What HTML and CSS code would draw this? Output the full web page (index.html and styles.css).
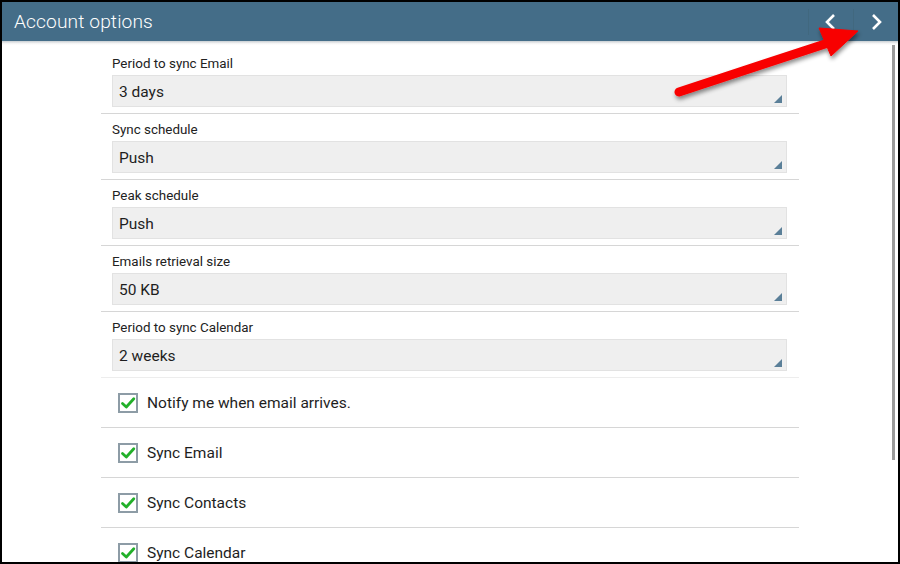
FILE: index.html
```html
<!DOCTYPE html>
<html>
<head>
<meta charset="utf-8">
<link rel="stylesheet" href="styles.css">
</head>
<body>
<div class="app">
  <header class="bar">
    <h1 class="title">Account options</h1>
    <div class="nav">
      <span class="sep"></span>
      <button class="navbtn" aria-label="Previous">
        <svg width="14" height="18" viewBox="0 0 14 18"><path d="M10 2 L3 9 L10 16" fill="none" stroke="#fff" stroke-width="2.6"/></svg>
      </button>
      <span class="sep"></span>
      <button class="navbtn" aria-label="Next">
        <svg width="14" height="18" viewBox="0 0 14 18"><path d="M4 2 L11 9 L4 16" fill="none" stroke="#fff" stroke-width="2.6"/></svg>
      </button>
    </div>
  </header>
  <div class="shadow"></div>
  <main class="content">
    <div class="list">
      <div class="row">
        <div class="label">Period to sync Email</div>
        <div class="select">3 days<span class="corner"></span></div>
      </div>
      <div class="row">
        <div class="label">Sync schedule</div>
        <div class="select">Push<span class="corner"></span></div>
      </div>
      <div class="row">
        <div class="label">Peak schedule</div>
        <div class="select">Push<span class="corner"></span></div>
      </div>
      <div class="row">
        <div class="label">Emails retrieval size</div>
        <div class="select">50 KB<span class="corner"></span></div>
      </div>
      <div class="row row-light">
        <div class="label">Period to sync Calendar</div>
        <div class="select">2 weeks<span class="corner"></span></div>
      </div>
      <div class="check-row">
        <span class="box"><svg width="20" height="20" viewBox="0 0 20 20"><rect x="1" y="1" width="18" height="18" fill="#fff" stroke="#8d9ca6" stroke-width="2"/><path d="M4.5 10.5 L8.3 14 L15.8 5.8" fill="none" stroke="#22b02a" stroke-width="2.8" stroke-linecap="round" stroke-linejoin="round"/></svg></span>
        <span class="ctext">Notify me when email arrives.</span>
      </div>
      <div class="check-row">
        <span class="box"><svg width="20" height="20" viewBox="0 0 20 20"><rect x="1" y="1" width="18" height="18" fill="#fff" stroke="#8d9ca6" stroke-width="2"/><path d="M4.5 10.5 L8.3 14 L15.8 5.8" fill="none" stroke="#22b02a" stroke-width="2.8" stroke-linecap="round" stroke-linejoin="round"/></svg></span>
        <span class="ctext">Sync Email</span>
      </div>
      <div class="check-row">
        <span class="box"><svg width="20" height="20" viewBox="0 0 20 20"><rect x="1" y="1" width="18" height="18" fill="#fff" stroke="#8d9ca6" stroke-width="2"/><path d="M4.5 10.5 L8.3 14 L15.8 5.8" fill="none" stroke="#22b02a" stroke-width="2.8" stroke-linecap="round" stroke-linejoin="round"/></svg></span>
        <span class="ctext">Sync Contacts</span>
      </div>
      <div class="check-row">
        <span class="box"><svg width="20" height="20" viewBox="0 0 20 20"><rect x="1" y="1" width="18" height="18" fill="#fff" stroke="#8d9ca6" stroke-width="2"/><path d="M4.5 10.5 L8.3 14 L15.8 5.8" fill="none" stroke="#22b02a" stroke-width="2.8" stroke-linecap="round" stroke-linejoin="round"/></svg></span>
        <span class="ctext">Sync Calendar</span>
      </div>
    </div>
    <div class="scrollbar"></div>
  </main>
  <svg class="arrow" width="896" height="120" viewBox="0 0 896 120">
    <defs>
      <filter id="ds" x="-10%" y="-30%" width="120%" height="160%">
        <feDropShadow dx="1" dy="3" stdDeviation="2" flood-color="#000" flood-opacity="0.45"/>
      </filter>
    </defs>
    <g filter="url(#ds)" fill="#f80000" stroke="#f80000">
      <line x1="677" y1="90" x2="826" y2="41" stroke-width="9" stroke-linecap="round"/>
      <polygon points="817,26 856,29 829,54" stroke-width="1" stroke-linejoin="round"/>
    </g>
  </svg>
</div>
</body>
</html>
```
FILE: styles.css
```css
html, body {
  margin: 0;
  padding: 0;
  background: #000;
}
body {
  width: 900px;
  height: 564px;
  overflow: hidden;
  font-family: Roboto, "Liberation Sans", sans-serif;
}
.app {
  position: relative;
  margin: 2px;
  width: 896px;
  height: 560px;
  background: #fff;
  overflow: hidden;
  display: flex;
  flex-direction: column;
}
.bar {
  height: 39px;
  flex: 0 0 39px;
  background: #446d88;
  display: flex;
  align-items: center;
  justify-content: space-between;
}
.title {
  margin: 0 0 0 12px;
  font-weight: 300;
  font-size: 19.2px;
  color: #fff;
  letter-spacing: 0.1px;
}
.nav {
  display: flex;
  align-items: center;
  height: 100%;
}
.sep {
  width: 1px;
  height: 26px;
  background: #41687f;
}
.navbtn {
  width: 44px;
  height: 100%;
  border: 0;
  padding: 0;
  background: transparent;
  display: flex;
  align-items: center;
  justify-content: center;
}
.shadow {
  height: 4px;
  flex: 0 0 4px;
  background: linear-gradient(#c8ced2, #f4f4f4 60%, #fff);
}
.content {
  flex: 1;
  position: relative;
  display: flex;
  padding-top: 3px;
}
.list {
  margin-left: 99px;
  width: 698px;
}
.row {
  padding: 5px 12px 6px 11px;
  border-bottom: 1px solid #d6d6d6;
  display: flex;
  flex-direction: column;
  gap: 2px;
}
.row-light {
  border-bottom-color: #ededed;
}
.label {
  font-size: 13.4px;
  line-height: 21px;
  height: 20px;
  color: #222;
}
.select {
  position: relative;
  height: 30px;
  background: #efefef;
  border: 1px solid #e2e2e2;
  font-size: 15.5px;
  line-height: 32px;
  padding-left: 6px;
  color: #1e1e1e;
}
.corner {
  position: absolute;
  right: 4px;
  bottom: 3px;
  width: 0;
  height: 0;
  border-left: 8px solid transparent;
  border-bottom: 8px solid #5a7f98;
}
.check-row {
  height: 49px;
  border-bottom: 1px solid #d6d6d6;
  display: flex;
  align-items: center;
  padding-left: 17px;
  gap: 9px;
}
.box {
  width: 20px;
  height: 20px;
  display: block;
}
.box svg {
  display: block;
}
.ctext {
  font-size: 15.5px;
  color: #1e1e1e;
}
.scrollbar {
  position: absolute;
  right: 3px;
  top: 0;
  width: 3px;
  height: 415px;
  background: #9a9a9a;
}
.arrow {
  position: absolute;
  left: 0;
  top: 0;
  pointer-events: none;
}
```
